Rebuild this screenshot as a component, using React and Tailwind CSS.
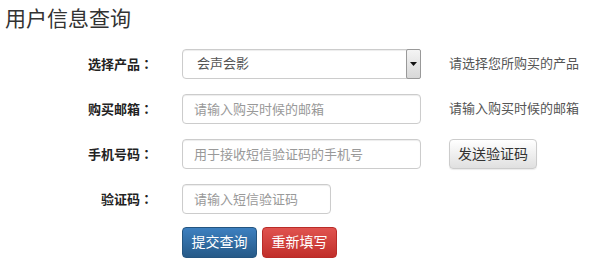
export default function App() {
  const font = { fontFamily: '"Liberation Sans", "Noto Sans CJK SC", sans-serif' };
  const colonFont = { fontFamily: '"Noto Sans CJK TC", sans-serif' };
  const inputCls =
    "h-[30px] rounded-[4px] border border-[#cccccc] bg-white px-[11px] text-[13px] text-[#555] placeholder:text-[#999] shadow-[inset_0_1px_1px_rgba(0,0,0,0.075)] outline-none";
  const Label = ({ children }) => (
    <div className="w-[153px] text-right text-[13px] font-bold text-[#222]">
      {children}
      <span style={colonFont}>：</span>
    </div>
  );
  return (
    <div className="w-[600px] h-[270px] bg-white text-[#333] relative" style={font}>
      <div className="pl-[5px] pt-[5px] h-[49px]">
        <h1 className="text-[21px] leading-[28px] font-normal text-[#333]">用户信息查询</h1>
      </div>
      <div className="flex flex-col gap-[15px]">
        <div className="flex items-center h-[30px]">
          <Label>选择产品</Label>
          <div className="ml-[29px] w-[239px] h-[30px] rounded-[4px] border border-[#cccccc] bg-white flex items-center shadow-[inset_0_1px_1px_rgba(0,0,0,0.075)]">
            <span className="pl-[14px] text-[13px] text-[#555] flex-1">会声会影</span>
            <div className="w-[15px] h-[30px] -mr-px border border-[#999] rounded-[2px] bg-gradient-to-b from-[#f4f4f4] to-[#d8d8d8] flex items-center justify-center">
              <svg width="7" height="4" viewBox="0 0 7 4"><path d="M0 0H7L3.5 4Z" fill="#111" /></svg>
            </div>
          </div>
          <div className="ml-[28px] text-[13px] text-[#555]">请选择您所购买的产品</div>
        </div>
        <div className="flex items-center h-[30px]">
          <Label>购买邮箱</Label>
          <input className={`ml-[29px] w-[239px] ${inputCls}`} placeholder="请输入购买时候的邮箱" style={font} />
          <div className="ml-[28px] text-[13px] text-[#555]">请输入购买时候的邮箱</div>
        </div>
        <div className="flex items-center h-[30px]">
          <Label>手机号码</Label>
          <input className={`ml-[29px] w-[239px] ${inputCls}`} placeholder="用于接收短信验证码的手机号" style={font} />
          <button className="ml-[28px] w-[88px] h-[30px] rounded-[4px] border border-[#cccccc] bg-gradient-to-b from-white to-[#e0e0e0] text-[14px] text-[#333] shadow-[0_1px_1px_rgba(0,0,0,0.08)]" style={font}>发送验证码</button>
        </div>
        <div className="flex items-center h-[30px]">
          <Label>验证码</Label>
          <input className={`ml-[29px] w-[149px] ${inputCls}`} placeholder="请输入短信验证码" style={font} />
        </div>
      </div>
      <div className="flex gap-[5px] pl-[182px] mt-[13px]">
        <button className="w-[75px] h-[31px] rounded-[4px] border border-[#245580] bg-gradient-to-b from-[#3d80c0] to-[#265a88] text-white text-[14px]" style={font}>提交查询</button>
        <button className="w-[75px] h-[31px] rounded-[4px] border border-[#b92c28] bg-gradient-to-b from-[#e0534f] to-[#c12e2a] text-white text-[14px]" style={font}>重新填写</button>
      </div>
    </div>
  );
}
